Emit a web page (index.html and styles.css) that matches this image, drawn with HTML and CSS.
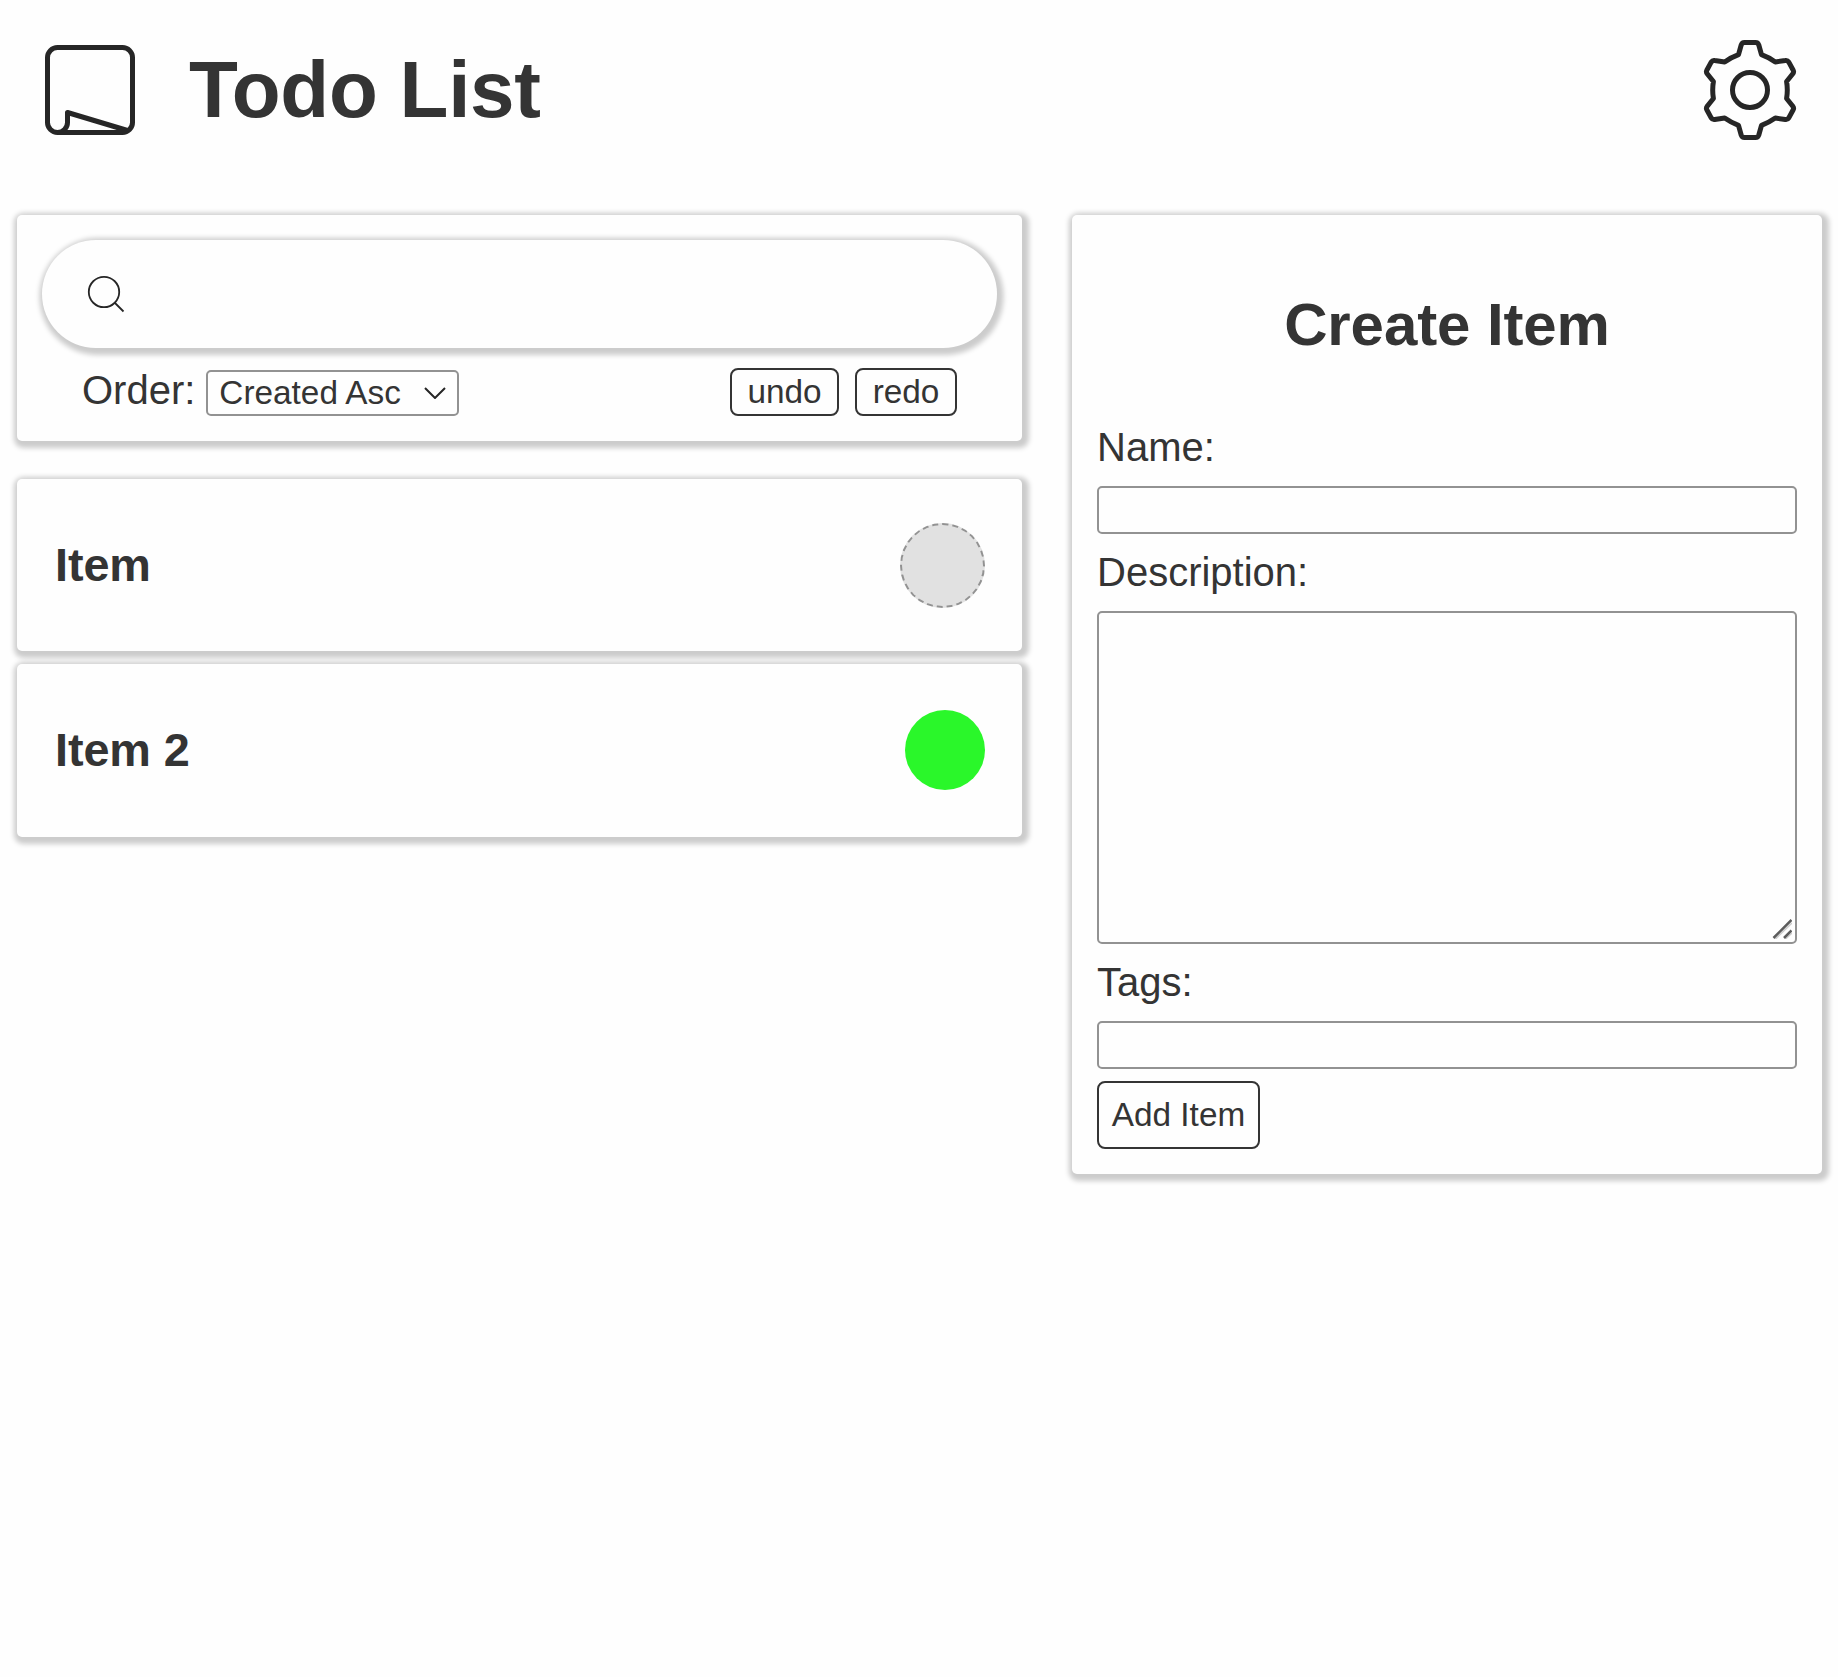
FILE: index.html
```html
<!DOCTYPE html>
<html lang="en">
<head>
<meta charset="utf-8">
<title>Todo List</title>
<link rel="stylesheet" href="styles.css">
</head>
<body>
<header class="header">
  <svg class="logo" viewBox="0 0 90 90">
    <path d="M12.5 87.5C7 87.5 2.5 83 2.5 77.5V12.500C2.500 7 7 2.500 12.500 2.500H77.500C83 2.500 87.500 7 87.500 12.500V77.500C87.500 83 83 87.500 77.500 87.500ZM12.500 87.500C18 87.500 22.500 83 22.500 77.500V67.500L82.500 85.500"/>
  </svg>
  <h1 class="title">Todo List</h1>
  <svg class="gear" viewBox="-50 -50 100 100">
    <path d="M-5.500-47.500H5.500Q8-47.500 8.800-45L11.500-35.300Q19-32.500 25.300-28L35.300-29.500Q37.500-29.900 38.800-27.900L43.200-19.800Q44.200-17.700 42.600-16L36.600-8.500Q38 0 36.600 8.500L42.600 16Q44.200 17.700 43.200 19.800L38.800 27.900Q37.500 29.900 35.300 29.500L25.300 28Q19 32.500 11.500 35.300L8.800 45Q8 47.500 5.500 47.500H-5.500Q-8 47.500-8.800 45L-11.500 35.300Q-19 32.500-25.300 28L-35.300 29.500Q-37.500 29.900-38.800 27.900L-43.200 19.800Q-44.200 17.700-42.600 16L-36.600 8.500Q-38 0-36.600-8.500L-42.600-16Q-44.200-17.700-43.200-19.800L-38.800-27.900Q-37.500-29.900-35.300-29.500L-25.300-28Q-19-32.500-11.500-35.300L-8.800-45Q-8-47.500-5.500-47.500Z"/>
    <circle r="17.500"/>
  </svg>
</header>
<main class="layout">
  <div class="left">
    <section class="panel filter">
      <label class="search">
        <svg class="search-icon" viewBox="0 0 38 38"><circle cx="17" cy="17" r="15.200"/><path d="M27.500 27.500L36.500 36.500"/></svg>
        <input class="search-input" type="text" aria-label="Search">
      </label>
      <div class="tools">
        <label class="order" for="order">Order:</label>
        <div class="select-wrap">
          <select class="select" id="order"><option>Created Asc</option></select>
          <svg class="chevron" viewBox="0 0 22 12"><path d="M1 1L11 11L21 1"/></svg>
        </div>
        <button class="btn undo">undo</button>
        <button class="btn redo">redo</button>
      </div>
    </section>
    <article class="panel item"><h3 class="item-name">Item</h3><span class="dot todo"></span></article>
    <article class="panel item last"><h3 class="item-name">Item 2</h3><span class="dot done"></span></article>
  </div>
  <form class="panel form">
    <h2 class="form-title">Create Item</h2>
    <label class="label" for="name">Name:</label>
    <input class="field" id="name" type="text">
    <label class="label" for="desc">Description:</label>
    <div class="area-wrap">
      <textarea class="field area" id="desc"></textarea>
      <svg class="grip" viewBox="0 0 20 20"><path class="grip-shade" d="M3.500 20L20 4M13.500 20L20 14"/><path d="M1.500 19L19.500 1M12 19L19.500 11.500"/></svg>
    </div>
    <label class="label" for="tags">Tags:</label>
    <input class="field" id="tags" type="text">
    <button class="btn add" type="button">Add Item</button>
  </form>
</main>
</body>
</html>
```
FILE: styles.css
```css
* { box-sizing: border-box; }
body {
  margin: 0;
  min-height: 100vh;
  background: #fefefe;
  color: #343434;
  font-family: "Liberation Sans", Arial, sans-serif;
  font-size: 40px;
}
svg { display: block; fill: none; stroke: #262626; }

.header {
  display: flex;
  align-items: center;
  height: 180px;
  padding: 0 38px 0 45px;
}
.logo { width: 90px; height: 90px; stroke-width: 5; stroke-linejoin: round; stroke-linecap: round; }
.title { margin: 0 auto 0 54px; font-size: 80px; line-height: 92px; letter-spacing: -0.25px; }
.gear { width: 100px; height: 100px; stroke-width: 5; stroke-linejoin: round; }

.layout {
  display: grid;
  grid-template-columns: 1005px 750px;
  column-gap: 50px;
  align-items: start;
  padding: 35px 0 0 17px;
}
.panel {
  background: #fefefe;
  border-radius: 5px;
  box-shadow: 2.5px 2.5px 5px 5px #ccc;
  box-shadow: 2px 2.5px 5px 4.5px #ccc;
}

.filter { height: 226px; padding: 25px; margin-bottom: 38px; }
.search {
  display: flex;
  align-items: center;
  height: 108px;
  padding: 0 45px;
  border-radius: 54px;
  box-shadow: 2px 2.5px 5px 4.5px #ccc;
}
.search-icon { width: 38px; height: 38px; stroke-width: 1.8; }
.search-input { flex: 1; border: 0; outline: 0; background: none; font-size: 33.33px; }
.tools { display: flex; align-items: flex-start; padding: 20px 40px 0; }
.order { line-height: 44px; }
.select-wrap { position: relative; margin: 2px auto 0 11px; }
.select {
  display: block;
  appearance: none;
  width: 253px;
  height: 46px;
  padding: 0 0 0 11px;
  border: 2px solid #929292;
  border-radius: 5px;
  background: none;
  color: inherit;
  font: 33.33px/42px "Liberation Sans", Arial, sans-serif;
}
.chevron { position: absolute; right: 13px; top: 17px; width: 22px; height: 12px; stroke-width: 2; }
.btn {
  padding: 0;
  height: 48px;
  border: 2px solid #343434;
  border-radius: 8px;
  background: none;
  color: inherit;
  font: 33.33px/38px "Liberation Sans", Arial, sans-serif;
}
.undo { width: 109px; margin-right: 16px; }
.redo { width: 102px; }

.item {
  display: flex;
  align-items: center;
  justify-content: space-between;
  height: 172px;
  padding: 0 37px 0 38px;
  margin-bottom: 13px;
}
.last { height: 173px; padding-bottom: 1px; margin: 0; }
.item-name { margin: 0 0 1px; font-size: 46.8px; line-height: 54px; letter-spacing: -0.1px; }
.dot { border-radius: 50%; }
.todo { width: 85px; height: 85px; background: #e1e1e1; border: 2px dashed #929292; }
.done { width: 80px; height: 80px; background: #2af72a; }

.form { height: 959px; padding: 75px 25px 0; }
.form-title { margin: 0 0 65px; font-size: 60px; line-height: 69px; text-align: center; letter-spacing: -0.1px; }
.label { display: block; line-height: 46px; margin-bottom: 16px; }
.field {
  display: block;
  width: 700px;
  height: 48px;
  margin: 0 0 15px;
  border: 2px solid #929292;
  border-radius: 5px;
  background: none;
  font: 33.33px "Liberation Sans", Arial, sans-serif;
}
.area-wrap { position: relative; }
.area { height: 333px; resize: none; }
.grip { position: absolute; right: 5px; bottom: 5px; width: 20px; height: 20px; stroke: #5c5c5c; stroke-width: 2.5; }
.grip-shade { stroke: #ccc; stroke-width: 1.5; }
.add { display: block; width: 163px; height: 68px; margin-top: -3px; }
```
